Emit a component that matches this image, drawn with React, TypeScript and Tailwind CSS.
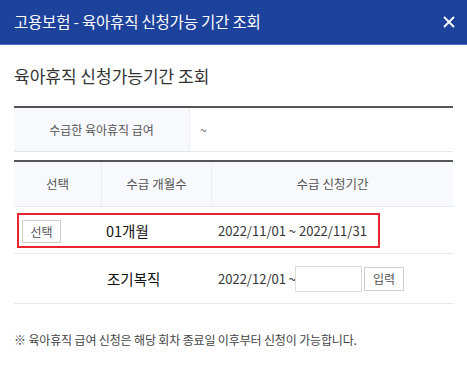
import React from "react";

const font = { fontFamily: '"Noto Sans CJK KR", "Noto Sans", sans-serif' };

export default function App() {
  return (
    <div className="w-[467px] h-[376px] bg-white" style={font}>
      <div className="h-[45px] bg-[#1d429c] border-b border-[#4d6fc0] flex items-center justify-between pl-[14px] pr-[12px]">
        <span className="text-white text-[15.5px] tracking-[-0.2px]">고용보험 - 육아휴직 신청가능 기간 조회</span>
        <svg width="12" height="12" viewBox="0 0 12 12" className="text-white">
          <path d="M1 1 L11 11 M11 1 L1 11" stroke="currentColor" strokeWidth="1.8" />
        </svg>
      </div>

      <div className="px-[14px]">
        <h2 className="mt-[19px] text-[17px] leading-[24px] text-[#333] font-normal">육아휴직 신청가능기간 조회</h2>

        <div className="mt-[18px] border-t-2 border-[#555] flex h-[46px] border-b border-b-[#e6e6e6]">
          <div className="w-[176px] bg-[#f7f9fd] border-r border-[#eceef2] flex items-center justify-center text-[12px] text-[#555]">
            수급한 육아휴직 급여
          </div>
          <div className="flex items-center pl-[10px] text-[12px] text-[#555]">~</div>
        </div>

        <div className="mt-[8px] border-t-2 border-[#555]">
          <div className="flex h-[45px] bg-[#f7f9fc] border-b border-[#e8e8e8] text-[12.5px] text-[#555]">
            <div className="w-[88px] flex items-center justify-center border-r border-[#eceef2]">선택</div>
            <div className="w-[110px] flex items-center justify-center border-r border-[#eceef2]">수급 개월수</div>
            <div className="flex-1 flex items-center justify-center">수급 신청기간</div>
          </div>

          <div className="h-[47px] border-b border-[#e8e8e8] pl-[3px] pt-[6px]">
            <div className="w-[363px] h-[35px] border-2 border-[#e8252f] flex items-center">
              <div className="w-[87px] pl-[3px]">
                <button className="w-[39px] h-[23px] border border-[#cfcfcf] bg-white text-[12px] text-[#555] leading-none">선택</button>
              </div>
              <span className="w-[112px] text-[14.5px] text-[#111] font-normal">01개월</span>
              <span className="text-[13px] text-[#333] whitespace-nowrap">2022/11/01 ~ 2022/11/31</span>
            </div>
          </div>

          <div className="h-[50px] border-b border-[#e8e8e8] flex items-center">
            <div className="w-[93px] shrink-0" />
            <span className="w-[111px] shrink-0 text-[14.5px] text-[#111] font-normal">조기복직</span>
            <span className="w-[77px] shrink-0 text-[13px] text-[#333] whitespace-nowrap">2022/12/01 ~</span>
            <input className="w-[67px] h-[26px] shrink-0 border border-[#ddd] outline-none" />
            <button className="ml-[2px] w-[40px] h-[24px] shrink-0 border border-[#cfcfcf] bg-white text-[12px] text-[#555] leading-none">입력</button>
          </div>
        </div>

        <p className="mt-[27px] text-[12px] leading-[18px] text-[#444] tracking-[-0.15px]">※ 육아휴직 급여 신청은 해당 회차 종료일 이후부터 신청이 가능합니다.</p>
      </div>
    </div>
  );
}
